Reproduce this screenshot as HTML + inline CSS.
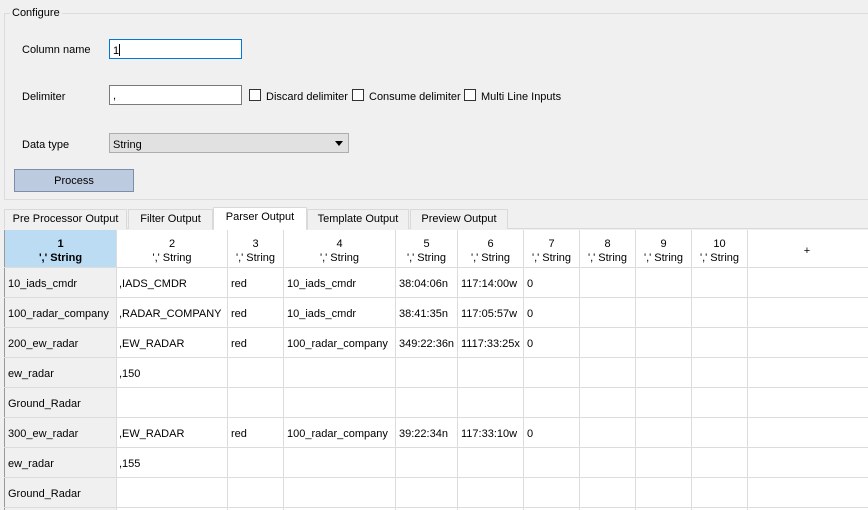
<!DOCTYPE html><html><head><style>
body{margin:0;width:868px;height:510px;background:#f0f0f0;font-family:"Liberation Sans",sans-serif;font-size:11px;color:#000;position:relative;overflow:hidden}
.a{position:absolute;white-space:nowrap}
.inp{position:absolute;background:#fff;border:1px solid #7a7a7a;box-sizing:border-box}
.cb{position:absolute;width:12px;height:12px;border:1px solid #333;background:#fff;box-sizing:border-box}
.tab{position:absolute;top:209px;height:20px;border:1px solid #d9d9d9;border-bottom:none;background:#f0f0f0;box-sizing:border-box;text-align:center;line-height:19px}
.vl{position:absolute;top:230px;width:1px;height:280px;background:#dcdcdc}
.hl{position:absolute;left:4px;width:864px;height:1px;background:#dcdcdc}
.h{position:absolute;top:237px;text-align:center;line-height:14px}
.c{position:absolute;line-height:14px}
</style></head><body>
<div class="a" style="left:4px;top:13px;width:870px;height:187px;border:1px solid #dcdcdc;box-sizing:border-box"></div>
<div class="a" style="left:10px;top:7px;background:#f0f0f0;padding:0 2px">Configure</div>
<div class="a" style="left:22px;top:44px">Column name</div>
<div class="inp" style="left:109px;top:39px;width:133px;height:20px;border-color:#0078d7"></div>
<div class="a" style="left:113px;top:44px">1<span style="display:inline-block;width:1px;height:12px;background:#000;vertical-align:-2px"></span></div>
<div class="a" style="left:22px;top:91px">Delimiter</div>
<div class="inp" style="left:109px;top:85px;width:133px;height:20px"></div>
<div class="a" style="left:113px;top:90px">,</div>
<div class="cb" style="left:249px;top:89px"></div><div class="a" style="left:266px;top:91px">Discard delimiter</div>
<div class="cb" style="left:352px;top:89px"></div><div class="a" style="left:369px;top:91px">Consume delimiter</div>
<div class="cb" style="left:464px;top:89px"></div><div class="a" style="left:481px;top:91px">Multi Line Inputs</div>
<div class="a" style="left:22px;top:139px">Data type</div>
<div class="a" style="left:109px;top:133px;width:240px;height:20px;border:1px solid #adadad;background:#e1e1e1;box-sizing:border-box"></div>
<div class="a" style="left:113px;top:139px">String</div>
<div class="a" style="left:335px;top:141px;width:0;height:0;border-left:4px solid transparent;border-right:4px solid transparent;border-top:5px solid #000"></div>
<div class="a" style="left:14px;top:169px;width:120px;height:23px;background:#bccbe0;border:1px solid #7f8ea8;box-sizing:border-box;text-align:center;line-height:23px">Process</div>
<div class="a" style="left:4px;top:228px;width:864px;height:1px;background:#d9d9d9"></div>
<div class="tab" style="left:4px;width:123px">Pre Processor Output</div>
<div class="tab" style="left:128px;width:85px">Filter Output</div>
<div class="tab" style="left:213px;top:207px;height:23px;width:94px;background:#fff">Parser Output</div>
<div class="tab" style="left:307px;width:102px">Template Output</div>
<div class="tab" style="left:410px;width:98px">Preview Output</div>
<div class="a" style="left:4px;top:230px;width:864px;height:280px;background:#fff;border-left:1px solid #999;box-sizing:border-box"></div>
<div class="a" style="left:5px;top:230px;width:111px;height:37px;background:#bcdcf4"></div>
<div class="a" style="left:5px;top:268px;width:111px;height:242px;background:#f0f0f0"></div>
<div class="vl" style="left:116px"></div><div class="vl" style="left:227px"></div><div class="vl" style="left:283px"></div><div class="vl" style="left:395px"></div><div class="vl" style="left:457px"></div><div class="vl" style="left:523px"></div><div class="vl" style="left:579px"></div><div class="vl" style="left:635px"></div><div class="vl" style="left:691px"></div><div class="vl" style="left:747px"></div>
<div class="hl" style="top:267px"></div><div class="hl" style="top:297px"></div><div class="hl" style="top:327px"></div><div class="hl" style="top:357px"></div><div class="hl" style="top:387px"></div><div class="hl" style="top:417px"></div><div class="hl" style="top:447px"></div><div class="hl" style="top:477px"></div><div class="hl" style="top:507px"></div>
<div class="h" style="left:5px;width:111px;font-weight:bold">1<br>',' String</div>
<div class="h" style="left:117px;width:110px">2<br>',' String</div>
<div class="h" style="left:228px;width:55px">3<br>',' String</div>
<div class="h" style="left:284px;width:111px">4<br>',' String</div>
<div class="h" style="left:396px;width:61px">5<br>',' String</div>
<div class="h" style="left:458px;width:65px">6<br>',' String</div>
<div class="h" style="left:524px;width:55px">7<br>',' String</div>
<div class="h" style="left:580px;width:55px">8<br>',' String</div>
<div class="h" style="left:636px;width:55px">9<br>',' String</div>
<div class="h" style="left:692px;width:55px">10<br>',' String</div>
<div class="h" style="left:748px;width:118px;top:244px">+</div>

<div class="c" style="left:8px;top:277px">10_iads_cmdr</div><div class="c" style="left:119px;top:277px">,IADS_CMDR</div><div class="c" style="left:231px;top:277px">red</div><div class="c" style="left:287px;top:277px">10_iads_cmdr</div><div class="c" style="left:399px;top:277px">38:04:06n</div><div class="c" style="left:461px;top:277px">117:14:00w</div><div class="c" style="left:527px;top:277px">0</div>
<div class="c" style="left:8px;top:307px">100_radar_company</div><div class="c" style="left:119px;top:307px">,RADAR_COMPANY</div><div class="c" style="left:231px;top:307px">red</div><div class="c" style="left:287px;top:307px">10_iads_cmdr</div><div class="c" style="left:399px;top:307px">38:41:35n</div><div class="c" style="left:461px;top:307px">117:05:57w</div><div class="c" style="left:527px;top:307px">0</div>
<div class="c" style="left:8px;top:337px">200_ew_radar</div><div class="c" style="left:119px;top:337px">,EW_RADAR</div><div class="c" style="left:231px;top:337px">red</div><div class="c" style="left:287px;top:337px">100_radar_company</div><div class="c" style="left:399px;top:337px">349:22:36n</div><div class="c" style="left:461px;top:337px">1117:33:25x</div><div class="c" style="left:527px;top:337px">0</div>
<div class="c" style="left:8px;top:367px">ew_radar</div><div class="c" style="left:119px;top:367px">,150</div>
<div class="c" style="left:8px;top:397px">Ground_Radar</div>
<div class="c" style="left:8px;top:427px">300_ew_radar</div><div class="c" style="left:119px;top:427px">,EW_RADAR</div><div class="c" style="left:231px;top:427px">red</div><div class="c" style="left:287px;top:427px">100_radar_company</div><div class="c" style="left:399px;top:427px">39:22:34n</div><div class="c" style="left:461px;top:427px">117:33:10w</div><div class="c" style="left:527px;top:427px">0</div>
<div class="c" style="left:8px;top:457px">ew_radar</div><div class="c" style="left:119px;top:457px">,155</div>
<div class="c" style="left:8px;top:487px">Ground_Radar</div>
</body></html>
